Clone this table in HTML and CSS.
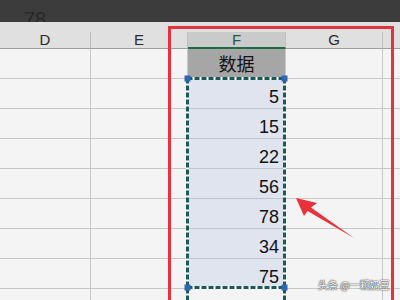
FILE: index.html
```html
<!DOCTYPE html>
<html>
<head>
<meta charset="utf-8">
<link rel="stylesheet" href="styles.css">
</head>
<body>
<div class="page">
  <div class="topbar"><span class="formula">78</span></div>
  <div class="strip"></div>
  <div class="row head">
    <div class="cell hd">D</div>
    <div class="cell hd">E</div>
    <div class="cell hd active">F</div>
    <div class="cell hd">G</div>
    <div class="cell hd last"></div>
  </div>
  <div class="row">
    <div class="cell"></div><div class="cell"></div>
    <div class="cell title">数据</div>
    <div class="cell"></div><div class="cell last"></div>
  </div>
  <div class="row"><div class="cell"></div><div class="cell"></div><div class="cell num">5</div><div class="cell"></div><div class="cell last"></div></div>
  <div class="row"><div class="cell"></div><div class="cell"></div><div class="cell num">15</div><div class="cell"></div><div class="cell last"></div></div>
  <div class="row"><div class="cell"></div><div class="cell"></div><div class="cell num">22</div><div class="cell"></div><div class="cell last"></div></div>
  <div class="row"><div class="cell"></div><div class="cell"></div><div class="cell num">56</div><div class="cell"></div><div class="cell last"></div></div>
  <div class="row"><div class="cell"></div><div class="cell"></div><div class="cell num">78</div><div class="cell"></div><div class="cell last"></div></div>
  <div class="row"><div class="cell"></div><div class="cell"></div><div class="cell num">34</div><div class="cell"></div><div class="cell last"></div></div>
  <div class="row"><div class="cell"></div><div class="cell"></div><div class="cell num">75</div><div class="cell"></div><div class="cell last"></div></div>
  <div class="row"><div class="cell"></div><div class="cell"></div><div class="cell"></div><div class="cell"></div><div class="cell last"></div></div>

  <div class="redbox"></div>
  <svg class="overlay" width="400" height="300" viewBox="0 0 400 300">
    <g stroke="#ffffff" stroke-width="3" fill="none">
      <line x1="187.5" y1="78.5" x2="187.5" y2="310"/>
      <line x1="284.5" y1="78.5" x2="284.5" y2="310"/>
      <line x1="187.5" y1="78.5" x2="284.5" y2="78.5"/>
      <line x1="187.5" y1="287.5" x2="284.5" y2="287.5"/>
    </g>
    <g stroke="#1c5a58" stroke-width="3" fill="none" stroke-dasharray="5 2">
      <line x1="187.5" y1="78.5" x2="187.5" y2="310"/>
      <line x1="284.5" y1="78.5" x2="284.5" y2="310"/>
      <line x1="187.5" y1="78.5" x2="284.5" y2="78.5"/>
      <line x1="187.5" y1="287.5" x2="284.5" y2="287.5"/>
    </g>
    <g fill="#2f66b8">
      <rect x="184.5" y="75.5" width="6" height="6"/>
      <rect x="281.5" y="75.5" width="6" height="6"/>
      <rect x="184.5" y="284.5" width="6" height="6"/>
      <rect x="281.5" y="284.5" width="6" height="6"/>
    </g>
    <polygon fill="#e8323c" points="296,198 317,203 311,207.5 354,238 307.5,211 304,216"/>
  </svg>
  <div class="watermark">头条 @一颗奶豆</div>
</div>
</body>
</html>
```
FILE: styles.css
```css
html, body {
  margin: 0;
  padding: 0;
}
body {
  width: 400px;
  height: 300px;
  overflow: hidden;
  font-family: "Liberation Sans", Arial, "Noto Sans CJK SC", sans-serif;
}
.page {
  position: relative;
  width: 400px;
  height: 300px;
  overflow: hidden;
  background: #f4f4f4;
}
.topbar {
  height: 22px;
  background: #3c3c3c;
  overflow: hidden;
  padding-left: 24px;
  box-sizing: border-box;
}
.formula {
  display: block;
  font-size: 20px;
  line-height: 20px;
  padding-top: 9px;
  color: #272727;
}
.strip {
  height: 10px;
  background: #e0e0e0;
}
.row {
  display: grid;
  grid-template-columns: 91px 97px 98px 97px 1fr;
  height: 30px;
}
.row.head {
  height: 17px;
  background: #e0e0e0;
}
.cell {
  box-sizing: border-box;
  border-right: 1px solid #c8c8c8;
  border-bottom: 1px solid #c8c8c8;
  background: #f4f4f4;
}
.cell.last {
  border-right: none;
}
.hd {
  background: #e0e0e0;
  border-right: 1px solid #bdbdbd;
  border-bottom: 1px solid #9e9e9e;
  font-size: 15px;
  line-height: 16px;
  text-align: center;
  color: #2a2a2a;
}
.hd.active {
  background: #cacaca;
  border-bottom: 2px solid #1f6b46;
  color: #235a3c;
  line-height: 15px;
}
.hd.last {
  border-right: none;
}
.title {
  background: #a6a6a6;
  border-bottom: none;
  font-family: "Noto Sans CJK SC", sans-serif;
  font-size: 18px;
  line-height: 28px;
  text-align: center;
  color: #141414;
}
.num {
  background: #dfe4ef;
  border-bottom: 1px solid #c0c4cc;
  display: flex;
  align-items: flex-end;
  justify-content: flex-end;
  padding-right: 6px;
  padding-bottom: 1px;
  font-size: 18px;
  line-height: 20px;
  color: #111111;
}
.redbox {
  position: absolute;
  left: 168px;
  top: 26px;
  width: 226px;
  height: 300px;
  box-sizing: border-box;
  border: 3px solid #e3343c;
}
.overlay {
  position: absolute;
  left: 0;
  top: 0;
}
.watermark {
  position: absolute;
  left: 318px;
  top: 279px;
  white-space: nowrap;
  font-family: "Noto Sans CJK SC", sans-serif;
  font-size: 10px;
  line-height: 12px;
  color: #ffffff;
  text-shadow: 0 0 1px #444, 0 0 1px #444, 0 0 2px #666;
}
```
